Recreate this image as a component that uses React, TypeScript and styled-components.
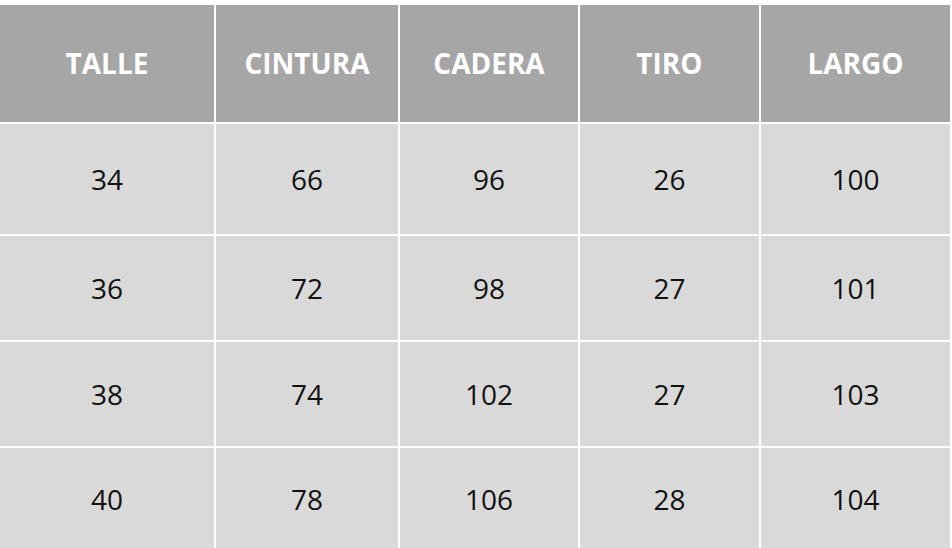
import React from "react";
import styled, { createGlobalStyle } from "styled-components";

const Global = createGlobalStyle`
  html, body { margin: 0; padding: 0; background: #ffffff; }
  body { font-family: "Open Sans", "Liberation Sans", sans-serif; overflow: hidden; }
`;

const Table = styled.div`
  display: grid;
  grid-template-columns: 214px 182px 178px 179px 1fr;
  grid-template-rows: 117px 110px 104px 104px 102px;
  gap: 2px;
  margin-top: 5px;
  width: 950px;
`;

const HeadCell = styled.div`
  background: #a6a6a6;
  color: #ffffff;
  font-weight: 700;
  font-size: 28px;
  display: flex;
  align-items: center;
  justify-content: center;
  padding-bottom: 2px;
`;

const Cell = styled.div`
  background: #d9d9d9;
  color: #111111;
  font-weight: 400;
  font-size: 28px;
  display: flex;
  align-items: center;
  justify-content: center;
`;

const headers = ["TALLE", "CINTURA", "CADERA", "TIRO", "LARGO"];
const rows = [
  ["34", "66", "96", "26", "100"],
  ["36", "72", "98", "27", "101"],
  ["38", "74", "102", "27", "103"],
  ["40", "78", "106", "28", "104"],
];

export default function App() {
  return (
    <>
      <Global />
      <Table>
        {headers.map((h) => (
          <HeadCell key={h}>{h}</HeadCell>
        ))}
        {rows.map((r, i) =>
          r.map((c, j) => <Cell key={`${i}-${j}`}>{c}</Cell>)
        )}
      </Table>
    </>
  );
}
